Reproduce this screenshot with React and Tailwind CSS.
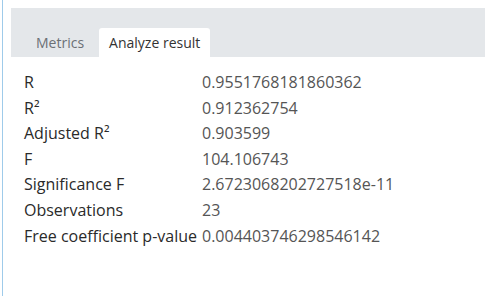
const rows = [
  ["R", "0.9551768181860362"],
  ["R²", "0.912362754"],
  ["Adjusted R²", "0.903599"],
  ["F", "104.106743"],
  ["Significance F", "2.6723068202727518e-11"],
  ["Observations", "23"],
  ["Free coefficient p-value", "0.004403746298546142"],
]

export default function App() {
  return (
    <div className="h-[296px] w-[485px] bg-white font-['Open_Sans',sans-serif]">
      <div className="ml-[2px] h-full border-l border-[#9fcbea] pt-[8px]">
        <div className="ml-[8px] flex h-[49px] items-end gap-[5px] bg-[#e4e7ea] pl-[15px]">
          <div className="flex h-[29px] items-center px-[10px] text-[14px] text-[#6b7075]">Metrics</div>
          <div className="flex h-[29px] items-center rounded-t-[3px] bg-white px-[10px] text-[14px] text-[#333]">
            Analyze result
          </div>
        </div>
        <table className="ml-[21px] mt-[13px] border-collapse text-[16px] leading-[25.6px]">
          <tbody>
            {rows.map(([label, value]) => (
              <tr key={label}>
                <td className="p-0 pr-[5px] text-[#2a2a2a]">{label}</td>
                <td className="p-0 text-[#555]">{value}</td>
              </tr>
            ))}
          </tbody>
        </table>
      </div>
    </div>
  )
}
